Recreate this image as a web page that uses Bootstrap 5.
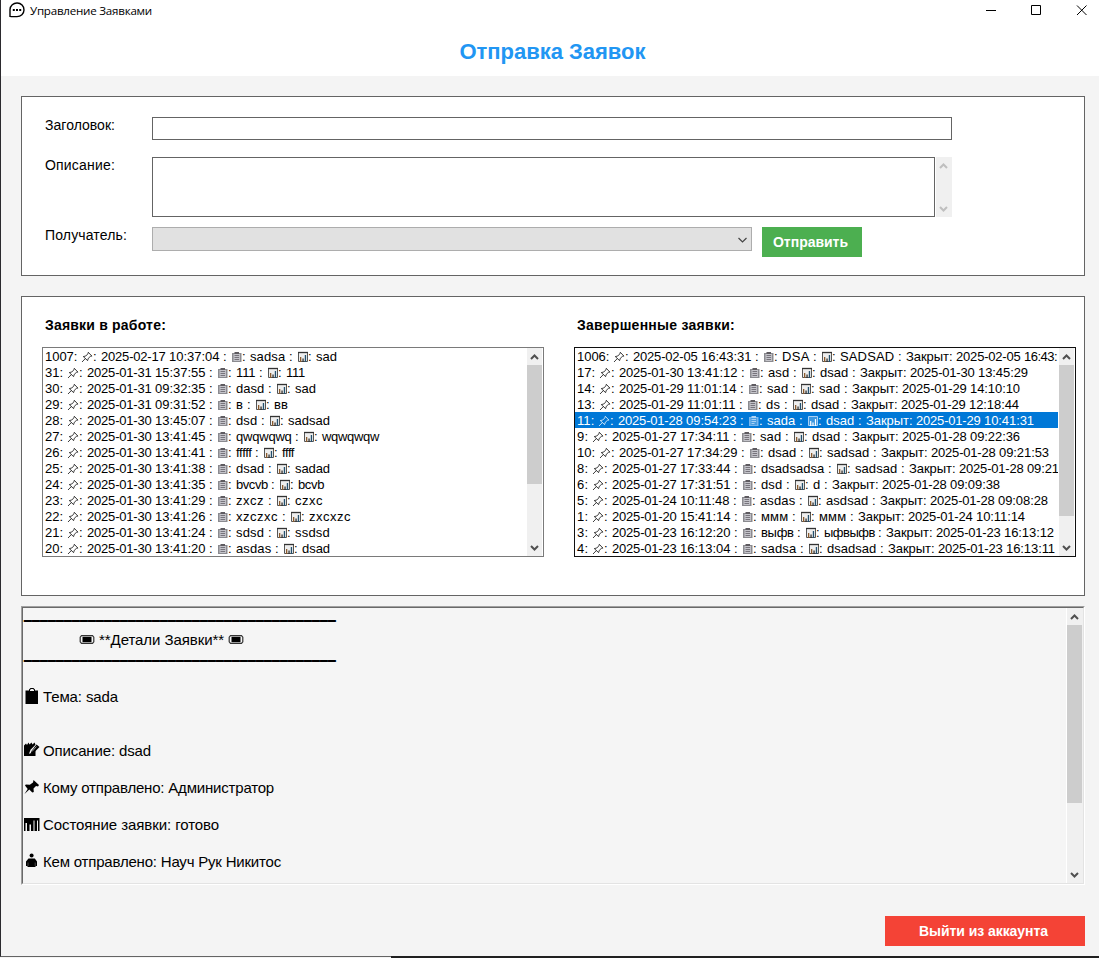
<!DOCTYPE html>
<html lang="ru">
<head>
<meta charset="utf-8">
<meta name="viewport" content="width=device-width, initial-scale=1">
<title>Управление Заявками</title>
<link rel="stylesheet" href="https://cdn.jsdelivr.net/npm/bootstrap@5.3.0/dist/css/bootstrap.min.css">
<style>
  body { font-family: "Liberation Sans", Arial, sans-serif; color: #000; background: #f4f4f4; font-size: 14px; line-height: 16px; height: 958px; overflow: hidden; }
  .app-window { height: 957px; border-left: 1px solid #2b2a2e; border-bottom: 1px solid #646464; }
  .title-bar { height: 76px; background: #fff; }
  .title-strip { height: 21px; padding: 2px 11px 0 8px; }
  .caption-text { font: 11.6px/18px "Open Sans", "Noto Sans", sans-serif; margin-left: 5px; }
  .page-title { color: #2196f3; font-size: 22px; line-height: 26px; margin: 18px 0 0 5px; font-weight: bold; }
  .content-area { padding: 20px 14px 0 20px; }
  .panel-box { background: #fff; border: 1px solid #646464; }
  .form-panel { height: 180px; padding: 20px 0 0 23px; }
  .form-label-cell { width: 107px; flex: none; padding-top: 0; }
  .plain-input { border: 1px solid #646464; background: #fff; border-radius: 0; padding: 0; display: block; resize: none; }
  .combo { width: 600px; height: 24px; background: #e1e1e1; border: 1px solid #adadad; padding: 1px 3px 0; }
  .flat-btn { border: 0; border-radius: 0; color: #fff; font-weight: bold; font-size: 14px; line-height: 16px; height: 30px; padding: 0 3px 0 0; }
  .send-btn { width: 100px; background: #4caf50; margin-left: 10px; }
  .exit-btn { width: 200px; background: #f44336; }
  .flat-btn:hover { color: #fff; }
  .lists-panel { height: 300px; padding: 20px 0 0 20px; margin-top: 20px; gap: 30px; }
  .list-col { width: 502px; }
  .list-heading { font-size: 14px; line-height: 16px; margin: 0 0 14px 3px; font-weight: bold; }
  .req-list { height: 210px; border: 1px solid #7a7a7a; padding-right: 1px; }
  .req-list.focused { border-color: #101010; }
  .req-rows { font-size: 13px; line-height: 18px; overflow: hidden; min-width: 0; margin-right: 1px; }
  .req-row { height: 16px; padding-left: 2px; white-space: pre; display: flex; }
  .req-row.selected { background: #0078d7; color: #fff; }
  .req-row span, [data-w] { white-space: pre; flex: none; }
  .req-row svg { width: 12px; height: 16px; flex: none; }
  .req-row svg + span ~ svg { margin-right: -1px; }
  .scroll-bar { width: 15px; flex: none; background: #f0f0f0; }
  .scroll-bar svg { display: block; flex: none; }
  .scroll-thumb { background: #cdcdcd; }
  .details-box { height: 279px; margin-top: 10px; background: #f5f5f5; border: 1px solid; border-color: #a0a0a0 #fff #fff #a0a0a0; }
  .details-inner { height: 277px; border: 1px solid; border-color: #696969 #e3e3e3 #e3e3e3 #696969; }
  .details-text { font-size: 15px; line-height: 18px; padding-left: 1px; }
  .detail-line { height: 18px; }
  .detail-line svg { width: 17px; height: 18px; margin-right: 2px; flex: none; }
  .rule-line { line-height: 12px; font-size: 14px; text-shadow: 0 -1px #000; }
  .desktop-edge { position: fixed; left: 391px; right: 0; bottom: 0; height: 2px; background: #202020; }
</style>
</head>
<body>
<svg width="0" height="0" class="d-none">
  <symbol id="pin" viewBox="0 0 12 16"><path d="M1 14 4.300 10.600M2.300 8.600 6.600 12.600 7.300 10.300 9.400 8.400 10.900 8.100 7.300 4.300 6.800 5.900 4.800 8Z" fill="none" stroke="currentColor" stroke-width=".9" opacity=".85"/></symbol>
  <symbol id="clip" viewBox="0 0 12 16"><path d="M1 5h9.500v9H1z" fill="#8b8b90"/><path d="M2.500 6h6.500v7H2.500z" fill="#c4c4ca"/><path d="M3.500 4h4.500v2H3.500z" fill="#5e5b60"/><path d="M3.500 7.500h4.600M3.500 9.500h4.600M3.500 11.500h4.600" stroke="#77747c"/></symbol>
  <symbol id="clipSel" viewBox="0 0 12 16"><path d="M1 5h9.500v9H1z" fill="#79b6ec"/><path d="M2.500 6h6.500v7H2.500z" fill="#4a9ee2"/><path d="M3.500 4h4.500v2H3.500z" fill="#add4f5"/><path d="M3.500 7.500h4.600M3.500 9.500h4.600M3.500 11.500h3" stroke="#a9d2f5"/></symbol>
  <symbol id="chart" viewBox="0 0 12 16"><path d="M1.500 4.500h9v9h-9z" fill="#eee" stroke="#555"/><path d="M1 4.500h10" stroke="#333" stroke-width="1.300"/><path d="M3 9h1.300v5H3z" fill="#8a5a2c"/><path d="M5.400 10.500h1.300V14H5.400z" fill="#333"/><path d="M7.800 7h1.300v7H7.800z" fill="#23506e"/></symbol>
  <symbol id="chartSel" viewBox="0 0 12 16"><path d="M1.500 4.500h9v9h-9z" fill="#3b97e0" stroke="#a9d0f4"/><path d="M3.700 9V14M6 10.500V14M8.500 7V14" stroke="#fff" stroke-width="1.200"/></symbol>
  <symbol id="up" viewBox="0 0 15 17"><path d="M4 11 7.500 7.500 11 11" fill="none" stroke="currentColor" stroke-width="2"/></symbol>
  <symbol id="down" viewBox="0 0 15 17"><path d="M4 7 7.500 10.500 11 7" fill="none" stroke="currentColor" stroke-width="2"/></symbol>
  <symbol id="ticket" viewBox="0 0 17 18"><path d="M2.500 4.700h11l1.300 1.500v4.600l-1.300 1.500h-11L1.200 10.800V6.200z" fill="#f5f5f5" stroke="#333" stroke-width="1.200"/><path d="M3.500 5.800h9v5.400h-9z"/></symbol>
</svg>

<div class="app-window">
  <header class="title-bar">
    <div class="title-strip d-flex align-items-start">
      <svg width="16" height="16" viewBox="0 0 16 16"><path d="M1 15V7.500A7 6.800 0 1 1 8 14.600H1.500" fill="none" stroke="#000" stroke-width="1.400"/><path d="M3.800 7h2v2h-2zM7 7h2v2H7zM10.200 7h2v2h-2z"/></svg>
      <span class="caption-text" data-w="122">Управление Заявками</span>
      <svg class="ms-auto" width="103" height="17" viewBox="0 0 103 17" fill="none" stroke="#000"><path d="M1 8.500h10M46.500 3.500h9v9h-9zM92 3.500l9.500 9.500M101.500 3.500 92 13" /></svg>
    </div>
    <h1 class="page-title text-center"><span data-w="186">Отправка Заявок</span></h1>
  </header>

  <main class="content-area">
    <section class="panel-box form-panel">
      <div class="d-flex" style="height:40px">
        <label class="form-label-cell" for="subject"><span data-w="70">Заголовок:</span></label>
        <input id="subject" class="plain-input" style="width:800px;height:23px">
      </div>
      <div class="d-flex" style="height:70px">
        <label class="form-label-cell" for="descr"><span data-w="70">Описание:</span></label>
        <textarea id="descr" class="plain-input" style="width:783px;height:60px"></textarea>
        <div class="scroll-bar d-flex flex-column justify-content-between" style="height:60px;width:16px;margin-left:1px;color:#bfbfbf">
          <svg width="15" height="17"><use href="#up"/></svg>
          <svg width="15" height="17"><use href="#down"/></svg>
        </div>
      </div>
      <div class="d-flex">
        <label class="form-label-cell"><span data-w="82">Получатель:</span></label>
        <div class="combo d-flex align-items-center justify-content-end">
          <svg width="11" height="8" viewBox="0 0 11 8"><path d="M1.500 2 5.500 6 9.500 2" fill="none" stroke="#444" stroke-width="1.200"/></svg>
        </div>
        <button class="btn flat-btn send-btn"><span data-w="75">Отправить</span></button>
      </div>
    </section>

    <section class="panel-box lists-panel d-flex">
      <div class="list-col">
        <h2 class="list-heading"><span data-w="121">Заявки в работе:</span></h2>
        <div class="req-list d-flex">
          <div class="req-rows flex-grow-1" id="active"></div>
          <div class="scroll-bar d-flex flex-column" style="color:#505050">
            <svg width="15" height="17"><use href="#up"/></svg>
            <div class="scroll-thumb" style="height:119px"></div>
            <svg class="mt-auto" width="15" height="17"><use href="#down"/></svg>
          </div>
        </div>
      </div>
      <div class="list-col">
        <h2 class="list-heading"><span data-w="158">Завершенные заявки:</span></h2>
        <div class="req-list focused d-flex">
          <div class="req-rows flex-grow-1" id="closed"></div>
          <div class="scroll-bar d-flex flex-column" style="color:#505050">
            <svg width="15" height="17"><use href="#up"/></svg>
            <div class="scroll-thumb" style="height:151px"></div>
            <svg class="mt-auto" width="15" height="17"><use href="#down"/></svg>
          </div>
        </div>
      </div>
    </section>

    <section class="details-box">
      <div class="details-inner d-flex">
        <div class="details-text flex-grow-1">
          <div class="detail-line rule-line"><span data-w="312">_______________________________________</span></div>
          <div class="detail-line d-flex" style="margin:5px 0 0 55px">
            <svg><use href="#ticket"/></svg><span class="ps-0" style="margin-left:1px" data-w="125">**Детали Заявки**</span><svg style="margin-left:4px"><use href="#ticket"/></svg>
          </div>
          <div class="detail-line rule-line" style="margin-top:-1px"><span data-w="312">_______________________________________</span></div>
          <div class="detail-line d-flex" style="margin-top:22px">
            <svg viewBox="0 0 17 18"><path d="M1.500 2.500h3.500V1.500L6.500 0h3L11 1.500v1h3V16H1.500z"/><path d="M6 3V2l1-1h2l1 1v1z" fill="#f5f5f5"/></svg><span data-w="75">Тема: sada</span>
          </div>
          <div class="detail-line d-flex" style="margin-top:36px">
            <svg viewBox="0 0 17 18"><path d="M0 3.500 2 1.500l1 1.500L4.500 .5l1 2L7.500 .5l1 2L10.500 .5l1 2.200-5 5-1.500 4 4-1 2.500-3V14H0z"/><path d="M12.500 2.500 15.500 5 9.500 11l-3 1 1-3z"/><path d="M12.500 4.500 8 9.500" stroke="#ddd" stroke-width=".7"/></svg><span data-w="108">Описание: dsad</span>
          </div>
          <div class="detail-line d-flex" style="margin-top:19px">
            <svg viewBox="0 0 17 18"><path d="M9.500 1 15 6l-1 1.500-2-.5-2.500 2.500.3 3.500-1.500.5-3-3L.5 15l3.200-5L1 6.500l.8-1 4 .3L9 3.500z"/></svg><span data-w="231">Кому отправлено: Администратор</span>
          </div>
          <div class="detail-line d-flex" style="margin-top:19px">
            <svg viewBox="0 0 17 18"><path d="M0 2h15.500v13H0z"/><path d="M1.500 15V7H3v8zM5.500 15V8.500H7V15zM9.500 15V4.500h1V15zM13 15V4.500h1V15z" fill="#f5f5f5"/></svg><span data-w="176">Состояние заявки: готово</span>
          </div>
          <div class="detail-line d-flex" style="margin-top:19px">
            <svg viewBox="0 0 17 18"><circle cx="7.600" cy="2.600" r="2"/><path d="M4.500 5.500h6.300L13 8.500V13h-1.500v1h-8v-1H2V8.500z"/><path d="M4 9.500v3.500M11.200 9.500v3.500" stroke="#777" stroke-width=".6"/></svg><span data-w="238">Кем отправлено: Науч Рук Никитос</span>
          </div>
        </div>
        <div class="scroll-bar d-flex flex-column border-start border-white" style="width:17px;color:#505050">
          <svg width="15" height="17"><use href="#up"/></svg>
          <div class="scroll-thumb" style="height:178px;width:15px"></div>
          <svg class="mt-auto" width="15" height="17"><use href="#down"/></svg>
        </div>
      </div>
    </section>

    <div class="d-flex justify-content-end" style="margin-top:31px">
      <button class="btn flat-btn exit-btn"><span data-w="129">Выйти из аккаунта</span></button>
    </div>
  </main>
</div>
<div class="desktop-edge"></div>

<script src="https://cdn.jsdelivr.net/npm/bootstrap@5.3.0/dist/js/bootstrap.bundle.min.js"></script>
<script>
  const active = [
    ['1007', '2025-02-17 10:37:04', 'sadsa', 'sad'],
    ['31', '2025-01-31 15:37:55', '111', '111'],
    ['30', '2025-01-31 09:32:35', 'dasd', 'sad'],
    ['29', '2025-01-31 09:31:52', 'в', 'вв'],
    ['28', '2025-01-30 13:45:07', 'dsd', 'sadsad'],
    ['27', '2025-01-30 13:41:45', 'qwqwqwq', 'wqwqwqw'],
    ['26', '2025-01-30 13:41:41', 'fffff', 'ffff'],
    ['25', '2025-01-30 13:41:38', 'dsad', 'sadad'],
    ['24', '2025-01-30 13:41:35', 'bvcvb', 'bcvb'],
    ['23', '2025-01-30 13:41:29', 'zxcz', 'czxc'],
    ['22', '2025-01-30 13:41:26', 'xzczxc', 'zxcxzc'],
    ['21', '2025-01-30 13:41:24', 'sdsd', 'ssdsd'],
    ['20', '2025-01-30 13:41:20', 'asdas', 'dsad']
  ];
  const closed = [
    ['1006', '2025-02-05 16:43:31', 'DSA', 'SADSAD', '2025-02-05 16:43:'],
    ['17', '2025-01-30 13:41:12', 'asd', 'dsad', '2025-01-30 13:45:29'],
    ['14', '2025-01-29 11:01:14', 'sad', 'sad', '2025-01-29 14:10:10'],
    ['13', '2025-01-29 11:01:11', 'ds', 'dsad', '2025-01-29 12:18:44'],
    ['11', '2025-01-28 09:54:23', 'sada', 'dsad', '2025-01-29 10:41:31'],
    ['9', '2025-01-27 17:34:11', 'sad', 'dsad', '2025-01-28 09:22:36'],
    ['10', '2025-01-27 17:34:29', 'dsad', 'sadsad', '2025-01-28 09:21:53'],
    ['8', '2025-01-27 17:33:44', 'dsadsadsa', 'sadsad', '2025-01-28 09:21'],
    ['6', '2025-01-27 17:31:51', 'dsd', 'd', '2025-01-28 09:09:38'],
    ['5', '2025-01-24 10:11:48', 'asdas', 'asdsad', '2025-01-28 09:08:28'],
    ['1', '2025-01-20 15:41:14', 'ммм', 'ммм', '2025-01-24 10:11:14'],
    ['3', '2025-01-23 16:12:20', 'выфв', 'ыфвыфв', '2025-01-23 16:13:12'],
    ['4', '2025-01-23 16:13:04', 'sadsa', 'dsadsad', '2025-01-23 16:13:11']
  ];
  const ctx = document.createElement('canvas').getContext('2d');
  ctx.font = '13px "Liberation Sans"';
  const adv = { s: 7, c: 7, z: 7, x: 7, v: 5, w: 9, f: 3, ' ': 4, ':': 4, '-': 4, 'к': 5.5, 'З': 7.5, 'ф': 9 };
  const pixelWidth = t => [...t].reduce((n, c) => n + (adv[c] || Math.round(ctx.measureText(c).width)), 0)
    - (t.match(/1(?=1)/g) || []).length
    - (/\d:$/.test(t) ? 3 : 0);
  const words = t => t.split(/(?<= )/).map(w => `<span data-w="${pixelWidth(w)}">${w}</span>`).join('');
  const icon = n => `<svg><use href="#${n}"/></svg>`;
  function fill(id, rows, selected) {
    document.getElementById(id).innerHTML = rows.map(r => {
      const on = r[0] === selected, s = on ? 'Sel' : '';
      return `<div class="req-row${on ? ' selected' : ''}">` + words(r[0] + ': ') + icon('pin') +
        words(`: ${r[1]} : `) + icon('clip' + s) + words(`: ${r[2]} : `) + icon('chart' + s) +
        words(`: ${r[3]}` + (r[4] ? ` : Закрыт: ${r[4]}` : '')) + '</div>';
    }).join('');
  }
  fill('active', active);
  fill('closed', closed, '11');
  // Track each text run to its nominal width
  document.querySelectorAll('[data-w]').forEach(el => {
    const d = (el.dataset.w - el.getBoundingClientRect().width) / el.textContent.length;
    el.style.letterSpacing = d.toFixed(3) + 'px';
  });
</script>
</body>
</html>
